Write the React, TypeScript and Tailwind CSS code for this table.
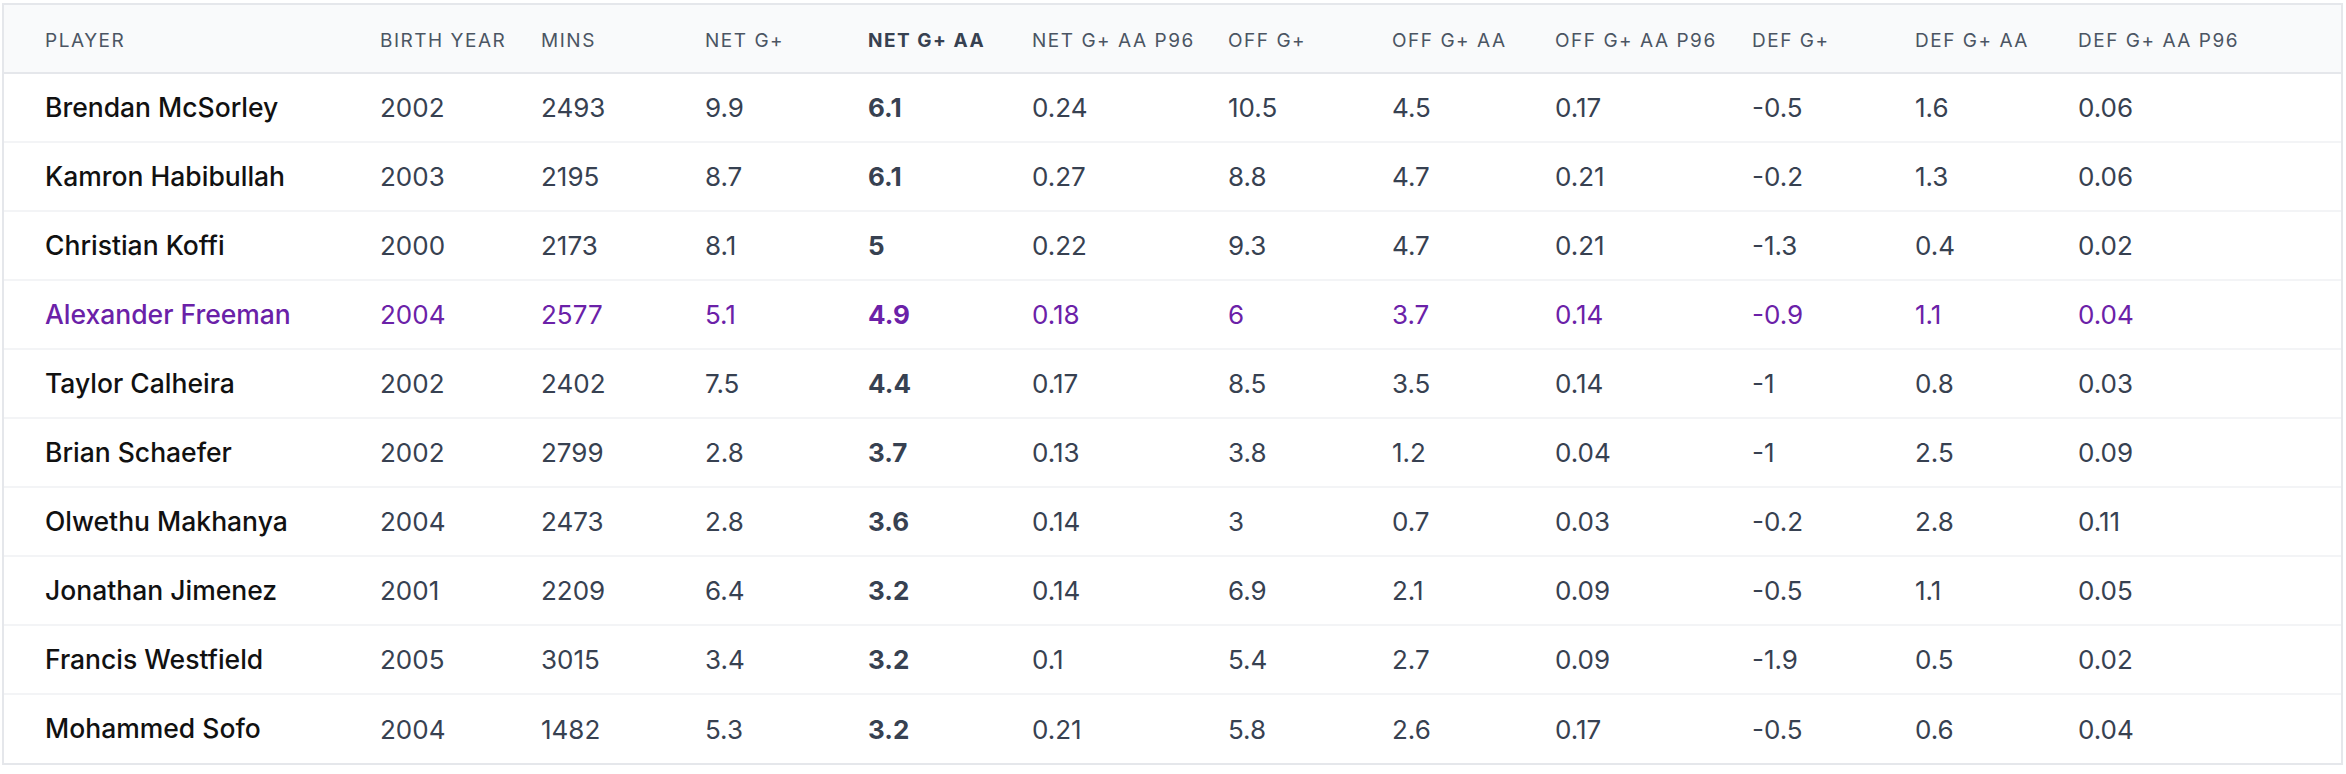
type Player = {
  name: string;
  birth: number;
  mins: number;
  stats: string[];
  highlight?: boolean;
};

const columns = [
  { label: "Player", width: "w-[376px]" },
  { label: "Birth Year", width: "w-[161px]" },
  { label: "Mins", width: "w-[164px]" },
  { label: "Net G+", width: "w-[163px]" },
  { label: "Net G+ AA", width: "w-[164px]", bold: true },
  { label: "Net G+ AA P96", width: "w-[196px]" },
  { label: "Off G+", width: "w-[164px]" },
  { label: "Off G+ AA", width: "w-[163px]" },
  { label: "Off G+ AA P96", width: "w-[197px]" },
  { label: "Def G+", width: "w-[163px]" },
  { label: "Def G+ AA", width: "w-[163px]" },
  { label: "Def G+ AA P96", width: "w-[263px]" },
];

// stats order: net, netAA, netP96, off, offAA, offP96, def, defAA, defP96
const players: Player[] = [
  { name: "Brendan McSorley", birth: 2002, mins: 2493, stats: ["9.9", "6.1", "0.24", "10.5", "4.5", "0.17", "-0.5", "1.6", "0.06"] },
  { name: "Kamron Habibullah", birth: 2003, mins: 2195, stats: ["8.7", "6.1", "0.27", "8.8", "4.7", "0.21", "-0.2", "1.3", "0.06"] },
  { name: "Christian Koffi", birth: 2000, mins: 2173, stats: ["8.1", "5", "0.22", "9.3", "4.7", "0.21", "-1.3", "0.4", "0.02"] },
  { name: "Alexander Freeman", birth: 2004, mins: 2577, stats: ["5.1", "4.9", "0.18", "6", "3.7", "0.14", "-0.9", "1.1", "0.04"], highlight: true },
  { name: "Taylor Calheira", birth: 2002, mins: 2402, stats: ["7.5", "4.4", "0.17", "8.5", "3.5", "0.14", "-1", "0.8", "0.03"] },
  { name: "Brian Schaefer", birth: 2002, mins: 2799, stats: ["2.8", "3.7", "0.13", "3.8", "1.2", "0.04", "-1", "2.5", "0.09"] },
  { name: "Olwethu Makhanya", birth: 2004, mins: 2473, stats: ["2.8", "3.6", "0.14", "3", "0.7", "0.03", "-0.2", "2.8", "0.11"] },
  { name: "Jonathan Jimenez", birth: 2001, mins: 2209, stats: ["6.4", "3.2", "0.14", "6.9", "2.1", "0.09", "-0.5", "1.1", "0.05"] },
  { name: "Francis Westfield", birth: 2005, mins: 3015, stats: ["3.4", "3.2", "0.1", "5.4", "2.7", "0.09", "-1.9", "0.5", "0.02"] },
  { name: "Mohammed Sofo", birth: 2004, mins: 1482, stats: ["5.3", "3.2", "0.21", "5.8", "2.6", "0.17", "-0.5", "0.6", "0.04"] },
];

export default function App() {
  return (
    <div className="bg-white w-[2346px] h-[774px] pl-[2px] pt-[3px] font-['Inter','Liberation_Sans',sans-serif]">
      <div className="w-[2341px] border-2 border-[#e5e7eb]">
        <table className="table-fixed border-collapse w-[2337px]">
          <thead>
            <tr className="bg-[#f9fafb] border-b-2 border-[#e5e7eb] h-[68px]">
              {columns.map((col, i) => (
                <th
                  key={col.label}
                  className={`${col.width} ${i === 0 ? "pl-[41px]" : ""} pt-[5px] text-left uppercase text-[19px] tracking-[0.08em] whitespace-nowrap ${
                    col.bold ? "font-bold text-[#374151]" : "font-normal text-[#4b5563]"
                  }`}
                >
                  {col.label}
                </th>
              ))}
            </tr>
          </thead>
          <tbody>
            {players.map((p, idx) => {
              const numColor = p.highlight ? "text-[#6b21a8]" : "text-[#374151]";
              return (
                <tr
                  key={p.name}
                  className={`h-[69px] text-[26px] ${idx < players.length - 1 ? "border-b-2 border-[#f3f4f6]" : ""}`}
                >
                  <td className={`pl-[41px] font-medium text-[26.5px] ${p.highlight ? "text-[#6b21a8]" : "text-[#111111]"}`}>
                    {p.name}
                  </td>
                  <td className={numColor}>{p.birth}</td>
                  <td className={numColor}>{p.mins}</td>
                  {p.stats.map((s, j) => (
                    <td key={j} className={`${numColor} ${j === 1 ? "font-bold" : ""}`}>
                      {s}
                    </td>
                  ))}
                </tr>
              );
            })}
          </tbody>
        </table>
      </div>
    </div>
  );
}
